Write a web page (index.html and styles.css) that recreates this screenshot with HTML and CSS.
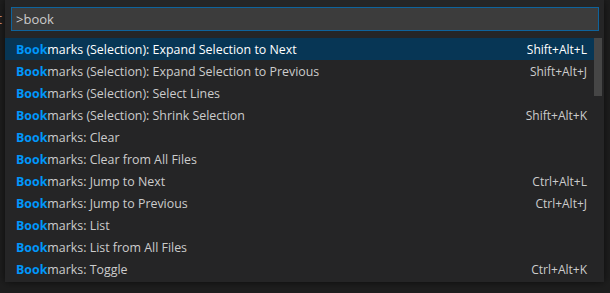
FILE: index.html
```html
<!DOCTYPE html>
<html lang="en">
<head>
  <meta charset="UTF-8">
  <title>Command Palette</title>
  <link rel="stylesheet" href="styles.css">
</head>
<body>
  <div class="editor">
    <div class="gutter"><span class="peek">t</span></div>
    <div class="quick-pick">
      <div class="input-box">
        <input type="text" value=">book">
      </div>
      <div class="list">
        <ul class="items">
          <li class="item selected"><span class="label"><b>Book</b>marks (Selection): Expand Selection to Next</span><span class="keys">Shift+Alt+L</span></li>
          <li class="item"><span class="label"><b>Book</b>marks (Selection): Expand Selection to Previous</span><span class="keys">Shift+Alt+J</span></li>
          <li class="item"><span class="label"><b>Book</b>marks (Selection): Select Lines</span></li>
          <li class="item"><span class="label"><b>Book</b>marks (Selection): Shrink Selection</span><span class="keys">Shift+Alt+K</span></li>
          <li class="item"><span class="label"><b>Book</b>marks: Clear</span></li>
          <li class="item"><span class="label"><b>Book</b>marks: Clear from All Files</span></li>
          <li class="item"><span class="label"><b>Book</b>marks: Jump to Next</span><span class="keys">Ctrl+Alt+L</span></li>
          <li class="item"><span class="label"><b>Book</b>marks: Jump to Previous</span><span class="keys">Ctrl+Alt+J</span></li>
          <li class="item"><span class="label"><b>Book</b>marks: List</span></li>
          <li class="item"><span class="label"><b>Book</b>marks: List from All Files</span></li>
          <li class="item"><span class="label"><b>Book</b>marks: Toggle</span><span class="keys">Ctrl+Alt+K</span></li>
        </ul>
        <div class="scrollbar"><div class="thumb"></div></div>
      </div>
    </div>
  </div>
</body>
</html>
```

FILE: styles.css
```css
* {
  margin: 0;
  padding: 0;
  box-sizing: border-box;
}

body {
  background-color: #1e1e1e;
  font-family: 'Open Sans', 'Noto Sans', sans-serif;
  font-size: 13px;
  color: #cccccc;
  overflow: hidden;
}

.editor {
  display: flex;
  height: 293px;
}

.gutter {
  width: 5px;
  overflow: hidden;
  padding-top: 9px;
}

.peek {
  color: #ce9178;
  font-size: 14px;
  margin-left: -3px;
}

.quick-pick {
  width: 599px;
  height: 282px;
  background-color: #252526;
  box-shadow: 0 0 8px rgba(0, 0, 0, 0.6);
  padding-top: 7px;
}

.input-box {
  margin: 0 5px 0 6px;
  height: 24px;
  background-color: #3c3c3c;
  border: 1px solid #0e639c;
}

.input-box input {
  width: 100%;
  height: 100%;
  background: transparent;
  border: none;
  outline: none;
  color: #cccccc;
  font-family: inherit;
  font-size: 13px;
  padding: 0 4px;
}

.list {
  display: flex;
  margin-top: 7px;
}

.items {
  list-style: none;
  flex: 1;
}

.item {
  display: flex;
  justify-content: space-between;
  align-items: center;
  height: 22px;
  padding: 1px 7px 0 11px;
  white-space: nowrap;
  font-size: 12.4px;
}

.item b {
  color: #0097fb;
  font-weight: bold;
}

.item.selected {
  background-color: #073655;
  color: #ffffff;
}

.keys {
  font-size: 12px;
}

.scrollbar {
  width: 10px;
}

.thumb {
  height: 58px;
  width: 8px;
  background-color: rgba(121, 121, 121, 0.4);
}
```
